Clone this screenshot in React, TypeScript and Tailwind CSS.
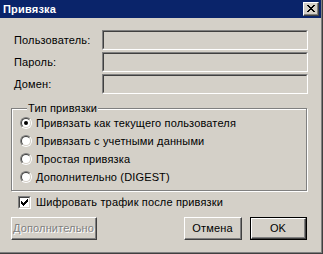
const font = { fontFamily: '"Liberation Sans", Arial, sans-serif' }

function Radio({ checked }: { checked?: boolean }) {
  return (
    <div className="w-[12px] h-[12px] rounded-full border border-t-[#808080] border-l-[#808080] border-b-white border-r-white shrink-0">
      <div className="w-full h-full rounded-full border border-t-[#404040] border-l-[#404040] border-b-[#d4d0c8] border-r-[#d4d0c8] bg-white flex items-center justify-center">
        {checked && <div className="w-[4px] h-[4px] rounded-full bg-black" />}
      </div>
    </div>
  )
}

function Checkbox() {
  return (
    <div className="w-[13px] h-[13px] border border-t-[#808080] border-l-[#808080] border-b-white border-r-white shrink-0">
      <div className="w-full h-full border border-t-[#404040] border-l-[#404040] border-b-[#d4d0c8] border-r-[#d4d0c8] bg-white">
        <svg width="9" height="9" viewBox="0 0 9 9" className="block">
          <path d="M1 3v3h1v1h1v1h1V7h1V6h1V5h1V4h1V1H7v1H6v1H5v1H4v1H3V4H2V3z" fill="#000" />
        </svg>
      </div>
    </div>
  )
}

function Button({
  children,
  width,
  isDefault,
  disabled,
}: {
  children: React.ReactNode
  width: string
  isDefault?: boolean
  disabled?: boolean
}) {
  const inner = (
    <div className="h-full border border-t-white border-l-white border-b-[#404040] border-r-[#404040]">
      <div className="h-full flex items-center justify-center border-b border-r border-[#808080]">
        <span
          className={disabled ? 'text-[#808080] [text-shadow:1px_1px_0_#fff]' : 'text-black'}
        >
          {children}
        </span>
      </div>
    </div>
  )
  return (
    <div className={`${width} h-[23px] ${isDefault ? 'border border-black' : ''}`}>{inner}</div>
  )
}

function Field({ label }: { label: string }) {
  return (
    <div className="flex items-center h-[20px]">
      <div className="w-[88px] text-black">{label}</div>
      <div className="w-[206px] h-[20px] border border-t-[#808080] border-l-[#808080] border-b-white border-r-white">
        <div className="h-full border border-t-[#404040] border-l-[#404040] border-b-[#d4d0c8] border-r-[#d4d0c8] bg-[#d4d0c8]" />
      </div>
    </div>
  )
}

const options = [
  { label: 'Привязать как текущего пользователя', checked: true },
  { label: 'Привязать с учетными данными' },
  { label: 'Простая привязка' },
  { label: 'Дополнительно (DIGEST)' },
]

export default function App() {
  return (
    <div className="w-[323px] h-[254px] bg-[#d4d0c8]" style={font}>
      <div className="w-[323px] h-[254px] border-r border-b border-[#404040]">
        <div className="h-full border-r border-b border-[#808080] flex flex-col text-[11px] leading-[13px] tracking-[0.15px]">
          <div className="h-[18px] bg-[#0a246a] flex items-center justify-between pl-[3px] pr-[2px]">
            <span className="text-white font-bold text-[11px] tracking-[0.2px]">Привязка</span>
            <div className="w-[16px] h-[14px] bg-[#d4d0c8] border border-t-white border-l-white border-b-[#404040] border-r-[#404040]">
              <div className="h-full border-b border-r border-[#808080] flex items-center justify-center">
                <svg width="8" height="7" viewBox="0 0 8 7" className="block">
                  <path
                    d="M0 0h2v1h1v1h2V1h1V0h2v1H7v1H6v1H5v1h1v1h1v1h1v1H6V6H5V5H3v1H2v1H0V6h1V5h1V4h1V3H2V2H1V1H0z"
                    fill="#000"
                  />
                </svg>
              </div>
            </div>
          </div>

          <div className="flex flex-col gap-[2px] mt-[12px] pl-[14px]">
            <Field label="Пользователь:" />
            <Field label="Пароль:" />
            <Field label="Домен:" />
          </div>

          <fieldset className="ml-[11px] mt-[8px] w-[296px] border border-[#808080] shadow-[inset_1px_1px_0_#fff,1px_1px_0_#fff] px-[8px] pb-[4px]">
            <legend className="ml-[7px] px-[1px] h-[13px] bg-[#d4d0c8] text-black">Тип привязки</legend>
            <div className="flex flex-col -mt-[1px]">
              {options.map((o) => (
                <div key={o.label} className="h-[18px] flex items-center gap-[4px]">
                  <Radio checked={o.checked} />
                  <span className="text-black">{o.label}</span>
                </div>
              ))}
            </div>
          </fieldset>

          <div className="mt-[3px] pl-[18px] h-[16px] flex items-center gap-[5px]">
            <Checkbox />
            <span className="text-black">Шифровать трафик после привязки</span>
          </div>

          <div className="mt-[7px] flex items-center pl-[11px] pr-[14px]">
            <Button width="w-[86px]" disabled>
              Дополнительно
            </Button>
            <div className="flex-1" />
            <Button width="w-[58px]">Отмена</Button>
            <div className="w-[8px]" />
            <Button width="w-[57px]" isDefault>
              OK
            </Button>
          </div>
        </div>
      </div>
    </div>
  )
}
